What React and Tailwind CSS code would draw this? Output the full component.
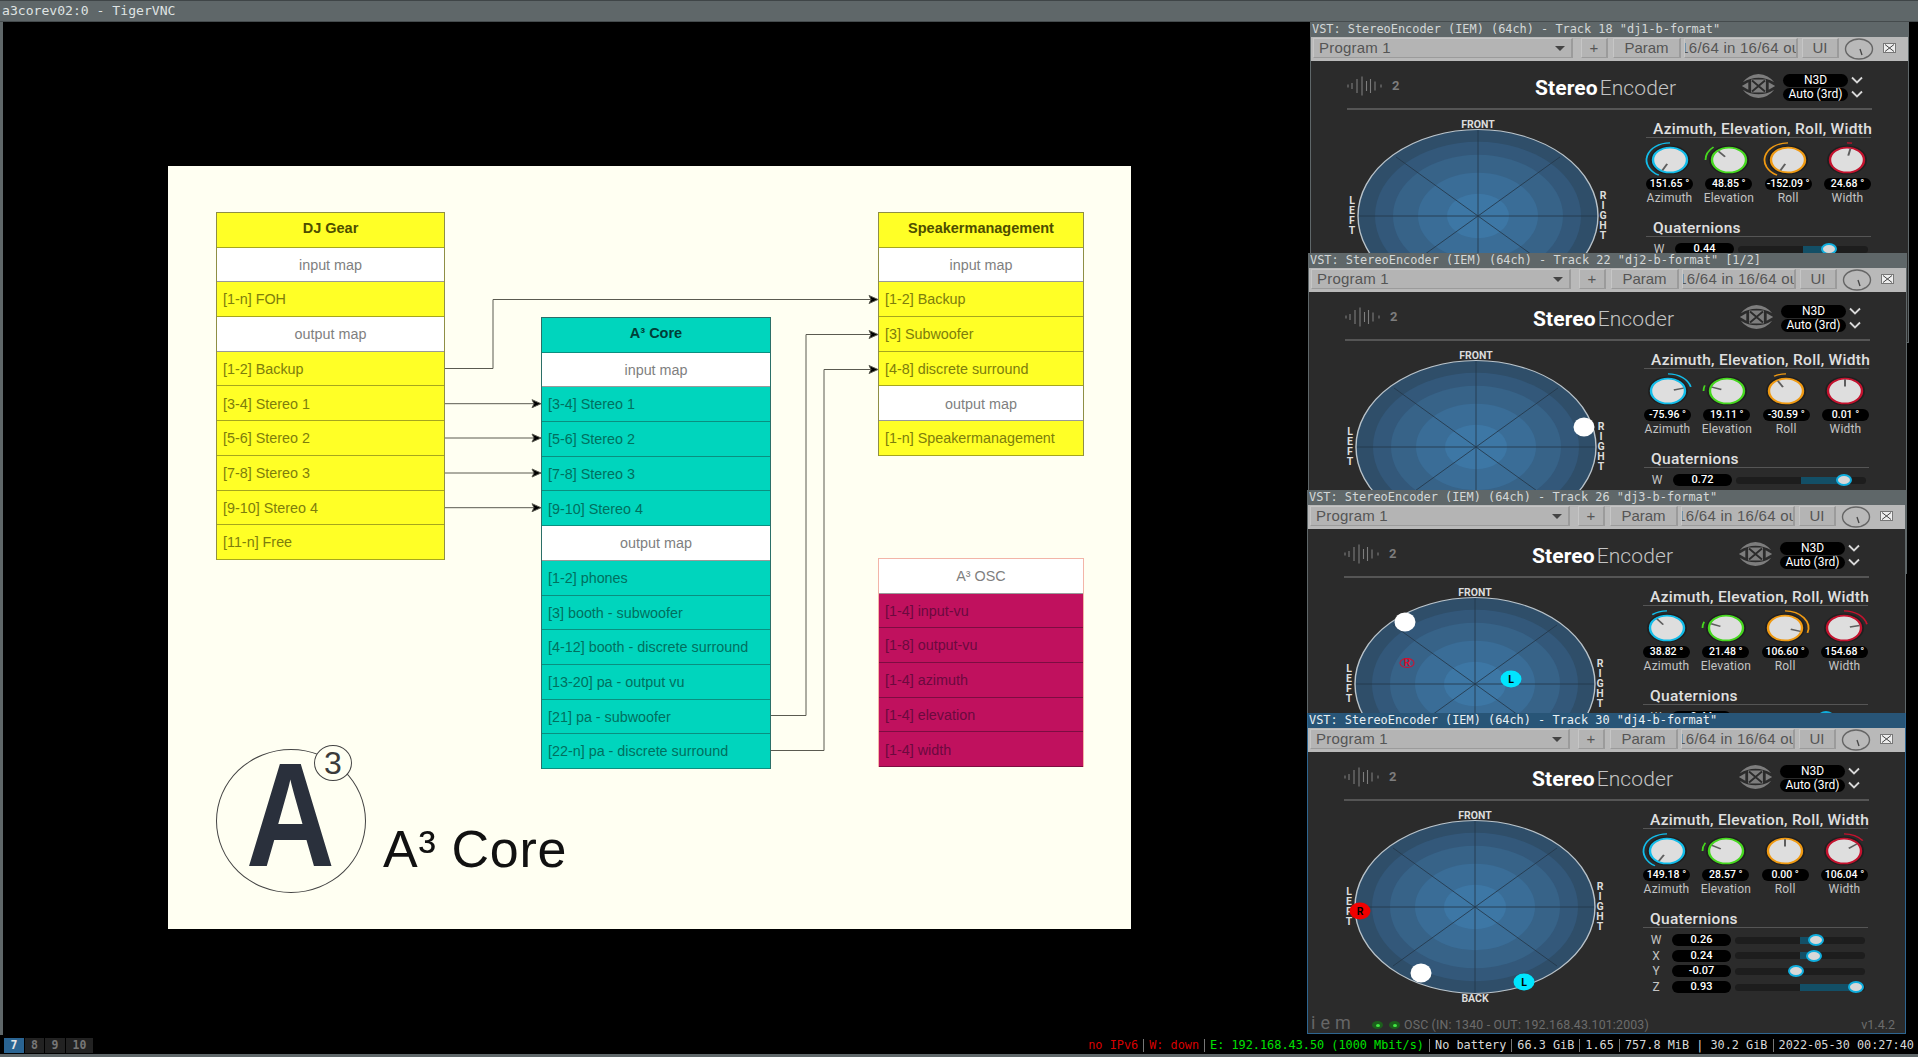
const sans = { fontFamily: '"Liberation Sans", Arial, sans-serif' }
const mono = { fontFamily: '"DejaVu Sans Mono", monospace' }
const roboto = { fontFamily: 'Roboto, sans-serif' }

const tables = [
  {
    name: 'dj',
    className: 'left-[48px] top-[46px] w-[229px]',
    theme: 'yellow',
    rows: [
      ['head', 'DJ Gear'],
      ['map', 'input map'],
      ['item', '[1-n] FOH'],
      ['map', 'output map'],
      ['item', '[1-2] Backup'],
      ['item', '[3-4] Stereo 1'],
      ['item', '[5-6] Stereo 2'],
      ['item', '[7-8] Stereo 3'],
      ['item', '[9-10] Stereo 4'],
      ['item', '[11-n] Free'],
    ],
  },
  {
    name: 'core',
    className: 'left-[373px] top-[151px] w-[230px]',
    theme: 'teal',
    rows: [
      ['head', 'A³ Core'],
      ['map', 'input map'],
      ['item', '[3-4] Stereo 1'],
      ['item', '[5-6] Stereo 2'],
      ['item', '[7-8] Stereo 3'],
      ['item', '[9-10] Stereo 4'],
      ['map', 'output map'],
      ['item', '[1-2] phones'],
      ['item', '[3] booth - subwoofer'],
      ['item', '[4-12] booth - discrete surround'],
      ['item', '[13-20] pa - output vu'],
      ['item', '[21] pa - subwoofer'],
      ['item', '[22-n] pa - discrete surround'],
    ],
  },
  {
    name: 'speaker',
    className: 'left-[710px] top-[46px] w-[206px]',
    theme: 'yellow',
    rows: [
      ['head', 'Speakermanagement'],
      ['map', 'input map'],
      ['item', '[1-2] Backup'],
      ['item', '[3] Subwoofer'],
      ['item', '[4-8] discrete surround'],
      ['map', 'output map'],
      ['item', '[1-n] Speakermanagement'],
    ],
  },
  {
    name: 'osc',
    className: 'left-[710px] top-[392px] w-[206px]',
    theme: 'magenta',
    rows: [
      ['map', 'A³ OSC'],
      ['item', '[1-4] input-vu'],
      ['item', '[1-8] output-vu'],
      ['item', '[1-4] azimuth'],
      ['item', '[1-4] elevation'],
      ['item', '[1-4] width'],
    ],
  },
]

const themes = {
  yellow: {
    head: 'bg-[#ffff26] text-[#4d4d00] border-[#a6a61e]',
    item: 'bg-[#ffff26] text-[#7d7d0c] border-[#a6a61e]',
  },
  teal: {
    head: 'bg-[#00d5bd] text-[#003f38] border-[#0a8f80]',
    item: 'bg-[#00d5bd] text-[#00705f] border-[#0a8f80]',
  },
  magenta: {
    head: 'bg-[#c0115e] text-[#6b0a3e] border-[#7d0d42]',
    item: 'bg-[#c0115e] text-[#6b0a3e] border-[#7d0d42]',
  },
}

const outerBorder = {
  yellow: 'border-[#8f8f45]',
  teal: 'border-[#2b6f68]',
  magenta: 'border-[#f3b5a8]',
}

function TableRow({ kind, label, theme }) {
  if (kind === 'map') {
    return (
      <div className="flex h-[34.7px] items-center justify-center border-b border-[#9a9a9a] bg-white pt-[2px] text-[14.35px] text-[#7f7f7f]">
        {label}
      </div>
    )
  }
  if (kind === 'head') {
    return (
      <div className={`flex h-[34.7px] items-center justify-center border-b pb-[2px] text-[14.5px] font-bold ${themes[theme].head}`}>
        {label}
      </div>
    )
  }
  return (
    <div className={`flex h-[34.7px] items-center whitespace-nowrap border-b pl-[6px] pt-[2px] text-[14.35px] ${themes[theme].item}`}>
      {label}
    </div>
  )
}

function Table({ table }) {
  return (
    <div className={`absolute border-x border-t ${outerBorder[table.theme]} ${table.className}`} style={sans}>
      {table.rows.map(([kind, label]) => (
        <TableRow key={label} kind={kind} label={label} theme={table.theme} />
      ))}
    </div>
  )
}

function Arrow({ x, y }) {
  return <polygon points={`${x},${y} ${x - 9},${y - 4} ${x - 7},${y} ${x - 9},${y + 4}`} fill="#000" />
}

function Connectors() {
  const stereo = [237.7, 272, 307, 341.7]
  return (
    <svg className="absolute left-0 top-0" width="963" height="763" fill="none" stroke="#5a5a50" strokeWidth="1">
      <path d="M277 202.5 H325 V133.5 H705" />
      <Arrow x={710} y={133.5} />
      {stereo.map((y) => (
        <g key={y}>
          <path d={`M277 ${y} H368`} />
          <Arrow x={373} y={y} />
        </g>
      ))}
      <path d="M603 549.5 H638 V168.5 H705" />
      <Arrow x={710} y={168.5} />
      <path d="M603 584.5 H656 V203.5 H705" />
      <Arrow x={710} y={203.5} />
    </svg>
  )
}

function CoreLogo() {
  return (
    <div className="absolute left-[48px] top-[583px] h-[144px] w-[150px] rounded-[50%] border border-[#444]" style={sans}>
      <span className="absolute left-[20px] top-[-20px] origin-center scale-x-[0.83] text-[148px] font-bold leading-[170px] text-[#2a303c]">
        A
      </span>
      <div className="absolute left-[97px] top-[-5px] flex h-[36px] w-[38px] items-center justify-center rounded-[50%] border border-[#444] bg-[#fffff2] text-[32px] text-[#3a3a3a]">
        3
      </div>
    </div>
  )
}

function Slide() {
  return (
    <div className="absolute left-[168px] top-[166px] h-[763px] w-[963px] bg-[#fffff2]">
      <Connectors />
      {tables.map((table) => (
        <Table key={table.name} table={table} />
      ))}
      <CoreLogo />
      <div className="absolute left-[215px] top-[653px] text-[52px] leading-[60px] tracking-[0.7px] text-[#111]" style={sans}>
        A³ Core
      </div>
    </div>
  )
}

const polar = (r, a) => {
  const t = (a * Math.PI) / 180
  return [r * Math.sin(t), -r * Math.cos(t)]
}

const arcPath = (r, a0, a1) => {
  const [x0, y0] = polar(r, a0)
  const [x1, y1] = polar(r, a1)
  const large = Math.abs(a1 - a0) > 180 ? 1 : 0
  const sweep = a1 > a0 ? 1 : 0
  return `M${x0} ${y0} A${r} ${r} 0 ${large} ${sweep} ${x1} ${y1}`
}

const knobKinds = [
  { label: 'Azimuth', color: '#12bdea', start: 0, angle: (v) => -v },
  { label: 'Elevation', color: '#46d81f', start: -90, angle: (v) => v - 90 },
  { label: 'Roll', color: '#f09a12', start: 0, angle: (v) => v },
  { label: 'Width', color: '#c4122e', start: 0, angle: (v) => v / 2 },
]

function Knob({ kind, value }) {
  const angle = kind.angle(value)
  const [x0, y0] = polar(6, angle)
  const [x1, y1] = polar(16, angle)
  return (
    <div className="flex w-[47px] flex-col items-center">
      <svg className="mx-[-4px] shrink-0" width="56" height="38" viewBox="-28 -26 56 52" preserveAspectRatio="none">
        <circle r="20" fill="#1f1f1f" />
        <circle r="17" fill="#dedede" stroke={kind.color} strokeWidth="2.4" />
        <path d={arcPath(23.5, kind.start, angle)} fill="none" stroke={kind.color} strokeWidth="1.8" />
        <line x1={x0} y1={y0} x2={x1} y2={y1} stroke="#5e5e5e" strokeWidth="2" />
      </svg>
      <div className="mt-[-1px] flex h-[12px] w-full items-center justify-center whitespace-nowrap rounded-full bg-black text-[10.5px] font-medium text-white">
        {value.toFixed(2)} °
      </div>
      <div className="mt-px h-[14px] whitespace-nowrap text-[12px] leading-[14px] tracking-[0.2px] text-[#c4c4c4]">
        {kind.label}
      </div>
    </div>
  )
}

function Slider({ label, value }) {
  const thumb = 65 + 60 * value
  const fillLeft = Math.min(65, thumb)
  const fillWidth = Math.abs(thumb - 65)
  return (
    <div className="flex h-[12px] items-center">
      <div className="w-[29px] pr-[3px] text-center text-[12px] leading-[12px] text-[#c4c4c4]">{label}</div>
      <div className="flex h-[12px] w-[59px] items-center justify-center rounded-full bg-black text-[11px] leading-[12px] font-medium text-white">
        {value.toFixed(2)}
      </div>
      <div className="relative ml-[4px] h-[7px] w-[130px] rounded-full bg-[#1d1d1d]">
        <div className="absolute top-0 h-[7px] bg-[#134f66]" style={{ left: fillLeft, width: fillWidth }} />
        <div
          className="absolute top-[-2.5px] h-[12px] w-[16px] -translate-x-1/2 rounded-[50%] border-2 border-[#10aede] bg-[#d8d8d8]"
          style={{ left: thumb }}
        />
      </div>
    </div>
  )
}

function Sphere({ dots }) {
  const rings = [
    [120, '#2f4e69'],
    [103, '#33587a'],
    [85, '#376388'],
    [60, '#3a6d97'],
    [31, '#3d77a5'],
  ]
  const [d1x, d1y] = polar(116, 45)
  return (
    <div className="relative h-[192px] w-[299px]">
      <svg className="absolute left-[6px] top-[16px]" width="250" height="180" viewBox="-125 -125 250 250" preserveAspectRatio="none">
        {rings.map(([r, color]) => (
          <circle key={r} r={r} fill={color} />
        ))}
        <circle r="120" fill="none" stroke="#b9c3ca" strokeWidth="1.4" />
        <g stroke="#24384a" strokeWidth="1">
          <line x1="-119" x2="119" y1="0" y2="0" />
          <line y1="-119" y2="119" x1="0" x2="0" />
          <line x1={-d1x} y1={-d1y} x2={d1x} y2={d1y} />
          <line x1={-d1x} y1={d1y} x2={d1x} y2={-d1y} />
        </g>
      </svg>
      <div className="absolute left-[113px] top-[9px] w-[36px] text-center text-[10.5px] font-bold leading-[12px] text-[#dcdcdc]">FRONT</div>
      <div className="absolute left-[113px] top-[192px] w-[36px] text-center text-[10.5px] font-bold leading-[12px] text-[#dcdcdc]">BACK</div>
      <div className="absolute left-0 top-[86px] flex w-[10px] flex-col items-center text-[10.5px] font-bold leading-[10px] text-[#dcdcdc]">
        {'LEFT'.split('').map((c) => (
          <span key={c}>{c}</span>
        ))}
      </div>
      <div className="absolute left-[251px] top-[81px] flex w-[10px] flex-col items-center text-[10.5px] font-bold leading-[10px] text-[#dcdcdc]">
        {'RIGHT'.split('').map((c) => (
          <span key={c}>{c}</span>
        ))}
      </div>
      {dots.map((dot) => (
        <Dot key={dot.kind} dot={dot} />
      ))}
    </div>
  )
}

const dotStyles = {
  white: 'h-[19px] w-[21px] bg-white',
  left: 'h-[17px] w-[21px] bg-[#00e5ff] text-black',
  right: 'h-[17px] w-[21px] bg-[#f10000] text-black',
  rightFaded: 'h-[10px] w-[15px] border border-[#d01030] text-[#d01030]',
}

function Dot({ dot }) {
  return (
    <div
      className={`absolute flex -translate-x-1/2 -translate-y-1/2 items-center justify-center rounded-[50%] text-[10.5px] font-bold ${dotStyles[dot.kind]}`}
      style={{ left: 131 + dot.x, top: 106 + dot.y }}
    >
      {dot.kind === 'left' ? 'L' : dot.kind === 'white' ? '' : 'R'}
    </div>
  )
}

function WaveLogo() {
  const bars = [
    [0, 1.5], [4, 3], [9, 7], [14, 9.5], [18.5, 5], [22.5, 7], [27, 4.5], [33, 1.5],
  ]
  return (
    <svg width="35" height="22" viewBox="0 -11 35 22" stroke="#7d7d7d" strokeWidth="1.1">
      {bars.map(([x, h]) => (
        <line key={x} x1={x + 1} x2={x + 1} y1={-h} y2={h} />
      ))}
    </svg>
  )
}

function IemIcon() {
  return (
    <svg width="37" height="28" viewBox="-20 -14 40 28" fill="#7d7d7d">
      <path d="M-17 -4 Q-11 -12 0 -13 Q11 -12 17 -4 Q9 -9 0 -9 Q-9 -9 -17 -4 Z" />
      <path d="M-17 4 Q-11 12 0 13 Q11 12 17 4 Q9 9 0 9 Q-9 9 -17 4 Z" />
      <polygon points="-18,0 -11,-4 -11,4" />
      <polygon points="18,0 11,-4 11,4" />
      <rect x="-8" y="-7" width="16" height="14" />
      <path d="M-7 -6 L7 6 M7 -6 L-7 6" stroke="#2b2b2b" strokeWidth="2" />
    </svg>
  )
}

function Chevron() {
  return (
    <svg width="12" height="8" viewBox="0 0 12 8" fill="none" stroke="#d8d8d8" strokeWidth="1.8">
      <path d="M1 1.5 L6 6.5 L11 1.5" />
    </svg>
  )
}

function Led() {
  return (
    <span className="flex h-[8px] w-[11px] items-center justify-center rounded-[50%] bg-[#1c5f1c]">
      <span className="h-[3px] w-[4px] rounded-[50%] bg-[#43e843]" />
    </span>
  )
}

function ToolbarButton({ className, children }) {
  return (
    <div
      className={`flex h-[20px] shrink-0 items-center overflow-hidden border-y border-l border-r-2 border-t-[#c6c6c6] border-l-[#c6c6c6] border-r-[#9b9b9b] border-b-[#9b9b9b] bg-[#b4b4b4] text-[15px] leading-[18px] text-[#555] ${className}`}
    >
      {children}
    </div>
  )
}

function Toolbar() {
  return (
    <div className="flex h-[24px] shrink-0 items-start bg-[#b9b9b9] pl-[2px] pt-px" style={sans}>
      <ToolbarButton className="w-[260px] justify-between px-[5px]">
        <span className="tracking-[0.2px]">Program 1</span>
        <span className="mr-[1px] h-0 w-0 border-x-[5px] border-t-[5px] border-x-transparent border-t-[#444]" />
      </ToolbarButton>
      <ToolbarButton className="ml-[8px] w-[27px] justify-center">+</ToolbarButton>
      <ToolbarButton className="ml-[5px] w-[68px] justify-center">Param</ToolbarButton>
      <ToolbarButton className="ml-[3px] w-[114px] justify-center whitespace-nowrap">
        <span className="ml-[4px] tracking-[0.25px]">16/64 in 16/64 out</span>
      </ToolbarButton>
      <ToolbarButton className="ml-[4px] w-[37px] justify-center">UI</ToolbarButton>
      <svg className="ml-[5px] shrink-0" width="30" height="22" viewBox="-15 -11 30 22">
        <ellipse rx="13.5" ry="10" fill="#b9b9b9" stroke="#666" strokeWidth="1.4" />
        <line x1="1" y1="0" x2="3" y2="6" stroke="#444" strokeWidth="1.3" />
      </svg>
      <svg className="ml-[9px] mt-[5px] shrink-0" width="13" height="10" viewBox="0 0 13 10">
        <rect x="0.5" y="0.5" width="12" height="9" fill="#eee" stroke="#777" />
        <path d="M2 1.5 L11 8.5 M11 1.5 L2 8.5" stroke="#444" strokeWidth="1" />
      </svg>
    </div>
  )
}

function Plugin({ win }) {
  return (
    <div className="flex flex-1 flex-col overflow-hidden bg-[#2b2b2b] pl-[36px] pr-[36px]" style={roboto}>
      <div className="flex h-[49px] shrink-0 items-center border-b-2 border-[#555] pt-[3px]">
        <WaveLogo />
        <span className="ml-[10px] w-[143px] text-[13px] font-bold text-[#7d7d7d]">2</span>
        <div className="mt-[3px] w-[148px] whitespace-nowrap text-[21px] leading-[24px] tracking-[0.1px]">
          <span className="font-bold text-white">Stereo</span>
          <span className="ml-[2px] font-light text-[#c4c4c4]">Encoder</span>
        </div>
        <div className="ml-[57px]">
          <IemIcon />
        </div>
        <div className="ml-[6px] mt-[2px] flex flex-col gap-px">
          <div className="flex items-center gap-[3px]">
            <div className="flex h-[13px] w-[65px] items-center justify-center rounded-full bg-black text-[12px] text-white">N3D</div>
            <Chevron />
          </div>
          <div className="flex items-center gap-[3px]">
            <div className="flex h-[13px] w-[65px] items-center justify-center rounded-full bg-black text-[12px] text-white">Auto (3rd)</div>
            <Chevron />
          </div>
        </div>
      </div>
      <div className="flex shrink-0">
        <Sphere dots={win.dots} />
        <div className="w-[225px]">
          <div className="flex h-[28px] items-end whitespace-nowrap border-b border-[#555] pl-[7px] text-[15.5px] font-medium leading-[16px] tracking-[0.3px] text-[#e0e0e0]">
            Azimuth, Elevation, Roll, Width
          </div>
          <div className="mt-[3px] flex justify-between">
            {knobKinds.map((kind, index) => (
              <Knob key={kind.label} kind={kind} value={win.knobs[index]} />
            ))}
          </div>
          <div className="flex h-[32px] items-end border-b border-[#555] pl-[7px] text-[15.5px] font-medium leading-[16px] tracking-[0.3px] text-[#e0e0e0]">
            Quaternions
          </div>
          <div className="mt-[6px] flex flex-col gap-[3.7px]">
            {['W', 'X', 'Y', 'Z'].map((label, index) => (
              <Slider key={label} label={label} value={win.quats[index]} />
            ))}
          </div>
        </div>
      </div>
      <div className="ml-[-33px] mr-[-26px] mt-auto flex h-[16px] shrink-0 items-center">
        <span className="mt-[-5px] w-[61px] text-[18px] leading-[20px] tracking-[5px] text-[#666]">iem</span>
        <Led />
        <span className="ml-[6px]">
          <Led />
        </span>
        <span className="ml-[4px] whitespace-nowrap text-[12.3px] tracking-[0.2px] text-[#6c6c6c]">OSC (IN: 1340 - OUT: 192.168.43.101:2003)</span>
        <span className="ml-auto text-[12.5px] text-[#6c6c6c]">v1.4.2</span>
      </div>
    </div>
  )
}

const windows = [
  {
    className: 'left-[1310px] top-[22px]',
    title: 'VST: StereoEncoder (IEM) (64ch) - Track 18 "dj1-b-format"',
    knobs: [151.65, 48.85, -152.09, 24.68],
    quats: [0.44, 0.2, -0.3, 0.8],
    dots: [],
  },
  {
    className: 'left-[1308px] top-[253px]',
    title: 'VST: StereoEncoder (IEM) (64ch) - Track 22 "dj2-b-format" [1/2]',
    knobs: [-75.96, 19.11, -30.59, 0.01],
    quats: [0.72, -0.3, 0.5, 0.3],
    dots: [{ kind: 'white', x: 108, y: -20 }],
  },
  {
    className: 'left-[1307px] top-[490px]',
    title: 'VST: StereoEncoder (IEM) (64ch) - Track 26 "dj3-b-format"',
    knobs: [38.82, 21.48, 106.6, 154.68],
    quats: [0.44, 0.2, -0.3, 0.8],
    dots: [
      { kind: 'rightFaded', x: -68, y: -21 },
      { kind: 'white', x: -70, y: -62 },
      { kind: 'left', x: 36, y: -5 },
    ],
  },
  {
    className: 'left-[1307px] top-[713px]',
    title: 'VST: StereoEncoder (IEM) (64ch) - Track 30 "dj4-b-format"',
    active: true,
    knobs: [149.18, 28.57, 0, 106.04],
    quats: [0.26, 0.24, -0.07, 0.93],
    dots: [
      { kind: 'right', x: -115, y: 4 },
      { kind: 'white', x: -54, y: 66 },
      { kind: 'left', x: 49, y: 75 },
    ],
  },
]

function PluginWindow({ win }) {
  const titleBar = win.active ? 'bg-[#285577] text-[#e8f0f4]' : 'bg-[#5f6769] text-[#d4d8d8]'
  const frame = win.active ? 'border-[#2e6590]' : 'border-[#5f6769]'
  return (
    <div className={`absolute flex h-[321px] w-[599px] flex-col border-x border-b ${frame} ${win.className}`}>
      <div className={`flex h-[15px] shrink-0 items-center whitespace-pre pl-[1px] text-[11.9px] leading-[15px] ${titleBar}`} style={mono}>
        {win.title}
      </div>
      <Toolbar />
      <Plugin win={win} />
    </div>
  )
}

const statusBlocks = [
  { text: 'no IPv6', className: 'text-[#d80000]' },
  { text: 'W: down', className: 'text-[#d80000]' },
  { text: 'E: 192.168.43.50 (1000 Mbit/s)', className: 'text-[#00e000]' },
  { text: 'No battery', className: 'text-[#d8d8d8]' },
  { text: '66.3 GiB', className: 'text-[#d8d8d8]' },
  { text: '1.65', className: 'text-[#d8d8d8]' },
  { text: '757.8 MiB | 30.2 GiB', className: 'text-[#d8d8d8]' },
  { text: '2022-05-30 00:27:40', className: 'text-[#d8d8d8]' },
]

const workspaces = [
  { label: '7', className: 'w-[20px] bg-[#2a6492] text-[#e6e6e6]' },
  { label: '8', className: 'w-[19px] bg-[#222] text-[#777]' },
  { label: '9', className: 'w-[20px] bg-[#222] text-[#777]' },
  { label: '10', className: 'w-[27px] bg-[#222] text-[#777]' },
]

function StatusBar() {
  return (
    <div className="flex h-[22px] shrink-0 items-start border-b-[3px] border-[#5f6769] bg-black pl-[4px] pt-[3px]" style={mono}>
      <div className="flex gap-px">
        {workspaces.map((ws) => (
          <div key={ws.label} className={`flex h-[15px] items-center justify-center text-[11.5px] font-bold ${ws.className}`}>
            {ws.label}
          </div>
        ))}
      </div>
      <div className="ml-auto flex h-[15px] items-center whitespace-pre pr-[4px] text-[11.85px]">
        {statusBlocks.map((block, index) => (
          <div key={block.text} className="flex items-center">
            {index > 0 && <span className="mx-[5px] h-[13px] w-px bg-[#777]" />}
            <span className={block.className}>{block.text}</span>
          </div>
        ))}
      </div>
    </div>
  )
}

export default function App() {
  return (
    <div className="relative flex h-[1057px] w-[1918px] flex-col overflow-hidden bg-black">
      <div className="flex h-[22px] shrink-0 items-center border-y border-t-[#3f4547] border-b-[#454b4d] bg-[#5f6769] pl-[2px] text-[13.1px] text-[#dfe3e3]" style={mono}>
        a3corev02:0 - TigerVNC
      </div>
      <div className="flex-1 border-l-[3px] border-[#5f6769]" />
      <Slide />
      {windows.map((win) => (
        <PluginWindow key={win.title} win={win} />
      ))}
      <StatusBar />
    </div>
  )
}
